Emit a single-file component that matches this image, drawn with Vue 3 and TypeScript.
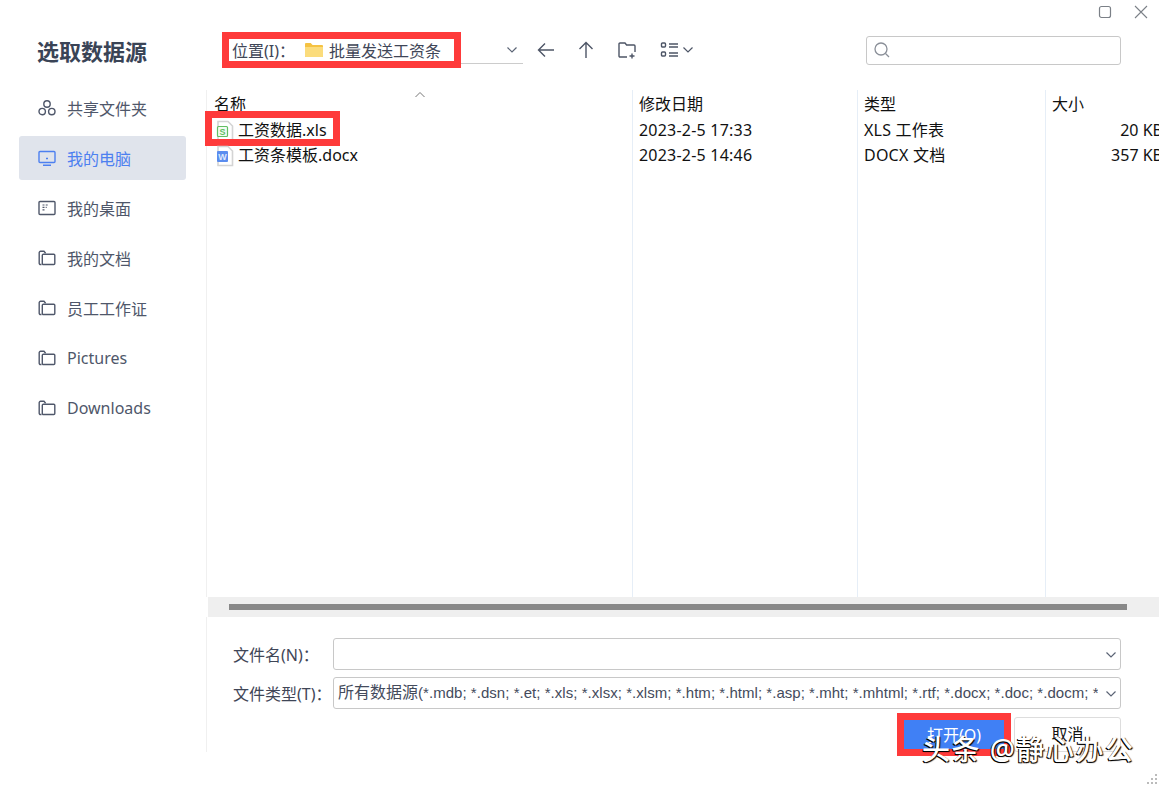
<script setup lang="ts">
interface Place {
  label: string;
  icon: "share" | "pc" | "desk" | "folder";
  active?: boolean;
}

interface Column {
  title: string;
  width: number;
  cells: string[];
  right?: boolean;
}

const places: Place[] = [
  { label: "共享文件夹", icon: "share" },
  { label: "我的电脑", icon: "pc", active: true },
  { label: "我的桌面", icon: "desk" },
  { label: "我的文档", icon: "folder" },
  { label: "员工工作证", icon: "folder" },
  { label: "Pictures", icon: "folder" },
  { label: "Downloads", icon: "folder" },
];

const columns: Column[] = [
  { title: "修改日期", width: 225, cells: ["2023-2-5 17:33", "2023-2-5 14:46"] },
  { title: "类型", width: 188, cells: ["XLS 工作表", "DOCX 文档"] },
  { title: "大小", width: 120, cells: ["20 KB", "357 KB"], right: true },
];

const filterName = "所有数据源";
const filterExts =
  "(*.mdb; *.dsn; *.et; *.xls; *.xlsx; *.xlsm; *.htm; *.html; *.asp; *.mht; *.mhtml; *.rtf; *.docx; *.doc; *.docm; *";
</script>

<template>
  <div class="dialog">
    <aside class="sidebar">
      <h1 class="title">选取数据源</h1>
      <ul class="places">
        <li v-for="p in places" :key="p.label" class="place" :class="{ active: p.active }">
          <svg class="place-icon" width="18" height="18" viewBox="0 0 18 18" fill="none" stroke="currentColor" stroke-width="1.4">
            <template v-if="p.icon === 'share'">
              <circle cx="9" cy="5" r="3.2" />
              <circle cx="4.2" cy="12.6" r="3.2" />
              <circle cx="13.8" cy="12.6" r="3.2" />
            </template>
            <template v-else-if="p.icon === 'pc'">
              <rect x="1" y="2.5" width="16" height="11" rx="1" />
              <path d="M5 16.3h8M8 9.5h2" />
            </template>
            <template v-else-if="p.icon === 'desk'">
              <rect x="1" y="2.5" width="16" height="13" rx="1" />
              <path d="M4.5 6h2M7.7 6h2M4.5 8.4h2M7.7 8.4h1M4.5 10.8h2" stroke-width="1.2" />
            </template>
            <template v-else>
              <path d="M3.5 15.5H2.6A1.3 1.3 0 0 1 1.2 14.2V3.6A1.3 1.3 0 0 1 2.6 2.3H6l1.6 2" />
              <path d="M4.3 6.4A1 1 0 0 1 5.3 5.3H15.8A1 1 0 0 1 16.8 6.3V14.5A1 1 0 0 1 15.8 15.5H5.3A1 1 0 0 1 4.3 14.5Z" />
            </template>
          </svg>
          <span>{{ p.label }}</span>
        </li>
      </ul>
    </aside>

    <main class="main">
      <div class="win-controls">
        <svg width="14" height="14" viewBox="0 0 14 14" fill="none" stroke="#7b8087" stroke-width="1.2">
          <rect x="1.5" y="1.5" width="11" height="11" rx="2" />
        </svg>
        <svg width="16" height="16" viewBox="0 0 16 16" fill="none" stroke="#7b8087" stroke-width="1.1">
          <path d="M2 2l12 12M14 2L2 14" />
        </svg>
      </div>

      <div class="toolbar">
        <div class="location">
          <span class="loc-label">位置(I)：</span>
          <svg class="loc-folder" width="18" height="15" viewBox="0 0 19 15" preserveAspectRatio="none">
            <path d="M0 2a1 1 0 0 1 1-1h5l2 2h10a1 1 0 0 1 1 1v10a1 1 0 0 1-1 1H1a1 1 0 0 1-1-1Z" fill="#f5c242" />
            <path d="M0 5h19v9a1 1 0 0 1-1 1H1a1 1 0 0 1-1-1Z" fill="#fbdc7c" />
          </svg>
          <span class="loc-name">批量发送工资条</span>
          <svg class="loc-caret" width="12" height="8" viewBox="0 0 12 8" fill="none" stroke="#5b6475" stroke-width="1.2">
            <path d="M1.5 1.5L6 6l4.5-4.5" />
          </svg>
          <div class="mark mark-loc"></div>
        </div>

        <div class="tools">
          <svg width="20" height="20" viewBox="0 0 20 20" fill="none" stroke="#4d5566" stroke-width="1.4">
            <path d="M18 10H2.5M9 3.5L2.5 10 9 16.5" />
          </svg>
          <svg width="20" height="20" viewBox="0 0 20 20" fill="none" stroke="#4d5566" stroke-width="1.4">
            <path d="M10 18V2.5M3.5 9L10 2.5 16.5 9" />
          </svg>
          <svg class="new-folder" width="20" height="20" viewBox="0 0 20 20" fill="none" stroke="#4d5566" stroke-width="1.4">
            <path d="M10 17H3a1 1 0 0 1-1-1V4a1 1 0 0 1 1-1h5l1.6 2H17a1 1 0 0 1 1 1v6" />
            <path d="M15 13.5v5M12.5 16h5" />
          </svg>
          <div class="view-btn">
            <svg width="20" height="18" viewBox="0 0 20 18" fill="none" stroke="#4d5566" stroke-width="1.4">
              <rect x="1.5" y="2" width="4" height="4" rx="1" />
              <rect x="1.5" y="11" width="4" height="4" rx="1" />
              <path d="M9 3h9M9 6h9M9 12h9M9 15h9" />
            </svg>
            <svg width="12" height="8" viewBox="0 0 12 8" fill="none" stroke="#4d5566" stroke-width="1.2">
              <path d="M1.5 1.5L6 6l4.5-4.5" />
            </svg>
          </div>
        </div>

        <div class="search">
          <svg width="18" height="18" viewBox="0 0 18 18" fill="none" stroke="#8a8f98" stroke-width="1.3">
            <circle cx="8" cy="8" r="6" />
            <path d="M12.5 12.5L16 16" />
          </svg>
        </div>
      </div>

      <div class="list">
        <section class="col col-name">
          <div class="head">
            名称
            <svg class="sort" width="12" height="7" viewBox="0 0 12 7" fill="none" stroke="#777" stroke-width="1">
              <path d="M1.5 6L6 1.5 10.5 6" />
            </svg>
          </div>
          <div class="cell file">
            <svg width="18" height="22" viewBox="0 0 18 22">
              <path d="M2 1.5H12l4.5 4.5v14.5H2Z" fill="#fff" stroke="#d4d4d4" stroke-width="1.6" />
              <rect x="1.5" y="6.5" width="10" height="10" rx="1" fill="#f2fbf2" stroke="#62bf62" stroke-width="1.2" />
              <text x="6.5" y="15" class="file-glyph" fill="#62bf62">S</text>
            </svg>
            <span>工资数据.xls</span>
            <div class="mark mark-file"></div>
          </div>
          <div class="cell file">
            <svg width="18" height="22" viewBox="0 0 18 22">
              <path d="M2 1.5H12l4.5 4.5v14.5H2Z" fill="#fff" stroke="#d4d4d4" stroke-width="1.6" />
              <rect x="1" y="6" width="11" height="11" rx="1" fill="#5b8def" />
              <text x="6.5" y="15" class="file-glyph" fill="#dfe9fc">W</text>
            </svg>
            <span>工资条模板.docx</span>
          </div>
        </section>
        <section
          v-for="c in columns"
          :key="c.title"
          class="col"
          :style="{ width: c.width + 'px' }"
        >
          <div class="head">{{ c.title }}</div>
          <div v-for="v in c.cells" :key="v" class="cell" :class="{ right: c.right }">{{ v }}</div>
        </section>
      </div>

      <div class="hscroll"><div class="thumb"></div></div>

      <form class="form" @submit.prevent>
        <div class="field-row">
          <label class="label">文件名(N)：</label>
          <div class="field">
            <svg class="caret" width="12" height="8" viewBox="0 0 12 8" fill="none" stroke="#5b6475" stroke-width="1.2">
              <path d="M1.5 1.5L6 6l4.5-4.5" />
            </svg>
          </div>
        </div>
        <div class="field-row">
          <label class="label">文件类型(T)：</label>
          <div class="field">
            <span class="filter">{{ filterName }}<span class="filter-exts">{{ filterExts }}</span></span>
            <svg class="caret" width="12" height="8" viewBox="0 0 12 8" fill="none" stroke="#5b6475" stroke-width="1.2">
              <path d="M1.5 1.5L6 6l4.5-4.5" />
            </svg>
          </div>
        </div>
        <div class="actions">
          <button class="btn primary" type="button">
            打开(O)
            <span class="mark mark-open"></span>
          </button>
          <button class="btn" type="button">取消</button>
        </div>
      </form>
    </main>

    <div class="watermark">头条 @静心办公</div>
    <svg class="grip" width="12" height="12" viewBox="0 0 12 12" fill="#bbb">
      <rect x="9" y="1" width="2" height="2" />
      <rect x="5" y="5" width="2" height="2" />
      <rect x="9" y="5" width="2" height="2" />
      <rect x="1" y="9" width="2" height="2" />
      <rect x="5" y="9" width="2" height="2" />
      <rect x="9" y="9" width="2" height="2" />
    </svg>
  </div>
</template>

<style>
html,
body {
  margin: 0;
  background: #fff;
}
</style>

<style scoped>
.dialog {
  position: relative;
  display: flex;
  width: 1159px;
  height: 786px;
  overflow: hidden;
  background: #fff;
  font-family: "Noto Sans", "Noto Sans CJK SC", sans-serif;
  font-size: 16px;
  color: #111;
}

.sidebar {
  width: 206px;
  height: 752px;
  flex-shrink: 0;
  box-sizing: border-box;
  padding-left: 19px;
}

.title {
  margin: 35px 0 0 18px;
  height: 32px;
  font-size: 22px;
  line-height: 32px;
  font-weight: 700;
  color: #3a4456;
}

.places {
  list-style: none;
  margin: 19px 0 0;
  padding: 0;
  display: flex;
  flex-direction: column;
  gap: 6px;
}

.place {
  display: flex;
  align-items: center;
  gap: 11px;
  width: 167px;
  height: 44px;
  box-sizing: border-box;
  padding-left: 19px;
  border-radius: 3px;
  color: #4f576a;
}

.place.active {
  background: #e0e4ec;
  color: #4d80f0;
}

.place-icon {
  flex-shrink: 0;
}

.main {
  flex: 1;
  min-width: 0;
  height: 752px;
  display: flex;
  flex-direction: column;
}

.win-controls {
  display: flex;
  justify-content: flex-end;
  align-items: center;
  gap: 21px;
  height: 24px;
  padding-right: 10px;
}

.toolbar {
  display: flex;
  align-items: center;
  height: 28px;
  margin-top: 12px;
  padding-left: 16px;
}

.location {
  position: relative;
  display: flex;
  align-items: center;
  width: 301px;
  height: 28px;
  box-sizing: border-box;
  padding-left: 10px;
  border-bottom: 1px solid #ccc;
  color: #3f4657;
}

.loc-label {
  width: 73px;
}

.loc-name {
  margin-left: 6px;
}

.loc-caret {
  position: absolute;
  right: 5px;
  top: 10px;
}

.tools {
  display: flex;
  align-items: center;
  gap: 20px;
  margin-left: 13px;
}

.new-folder {
  margin-left: 1px;
}

.view-btn {
  display: flex;
  align-items: center;
  gap: 2px;
  margin-left: 3px;
}

.search {
  display: flex;
  align-items: center;
  width: 255px;
  height: 29px;
  box-sizing: border-box;
  margin-left: auto;
  margin-right: 38px;
  padding-left: 6px;
  border: 1px solid #c8c8c8;
  border-radius: 3px;
}

.mark {
  position: absolute;
  box-sizing: border-box;
  border: 7px solid #fe3a3a;
  pointer-events: none;
}

.mark-loc {
  left: 0;
  top: -4px;
  width: 239px;
  height: 36px;
}

.mark-file {
  left: -2px;
  top: -7px;
  width: 135px;
  height: 35px;
}

.mark-open {
  left: -7px;
  top: -7px;
  right: -7px;
  bottom: -7px;
}

.list {
  display: flex;
  height: 507px;
  margin-top: 26px;
  border-left: 1px solid #f0f0f0;
}

.col {
  flex-shrink: 0;
  border-left: 1px solid #e6eef7;
  box-sizing: border-box;
}

.col-name {
  width: 425px;
  border-left: 0;
}

.head {
  position: relative;
  height: 28px;
  line-height: 28px;
  padding-left: 6px;
}

.col-name .head {
  padding-left: 7px;
}

.sort {
  position: absolute;
  left: 207px;
  top: 1px;
}

.cell {
  position: relative;
  height: 25px;
  line-height: 25px;
  padding-left: 6px;
  white-space: nowrap;
}

.cell:not(.right):not(.file) {
  letter-spacing: 0.22px;
}

.cell.right {
  text-align: right;
  padding-right: 2px;
}

.file {
  display: flex;
  align-items: center;
  gap: 4px;
  padding-left: 9px;
}

.file-glyph {
  font-size: 9px;
  font-weight: 700;
  text-anchor: middle;
  font-family: "Liberation Sans", sans-serif;
}

.hscroll {
  display: flex;
  align-items: center;
  height: 20px;
  margin-left: 2px;
  padding-left: 21px;
  padding-right: 32px;
  background: #efefef;
}

.thumb {
  flex: 1;
  height: 6px;
  background: #888;
}

.form {
  display: flex;
  flex-direction: column;
  gap: 7px;
  flex: 1;
  padding: 21px 38px 0 26px;
  border-left: 1px solid #f0f0f0;
}

.field-row {
  display: flex;
  align-items: center;
}

.label {
  width: 100px;
  flex-shrink: 0;
  color: #3f4657;
  white-space: nowrap;
}

.field {
  position: relative;
  flex: 1;
  min-width: 0;
  height: 32px;
  box-sizing: border-box;
  border: 1px solid #c8c8c8;
  border-radius: 3px;
  line-height: 30px;
  padding: 0 22px 0 4px;
  color: #444b5c;
}

.filter {
  display: block;
  overflow: hidden;
  white-space: nowrap;
  font-family: "Liberation Sans", "Noto Sans CJK SC", sans-serif;
}

.filter-exts {
  font-size: 15px;
  letter-spacing: 0.04px;
}

.caret {
  position: absolute;
  right: 3px;
  top: 12px;
}

.actions {
  display: flex;
  justify-content: flex-end;
  align-items: flex-start;
  gap: 10px;
  margin-top: 1px;
}

.btn {
  position: relative;
  width: 107px;
  height: 35px;
  box-sizing: border-box;
  padding: 0 0 4px;
  border: 1px solid #ddd;
  border-radius: 3px;
  background: #fff;
  font: inherit;
  color: #111;
}

.btn.primary {
  width: 100px;
  height: 29px;
  margin-top: 3px;
  padding-bottom: 2px;
  border: 0;
  border-radius: 0;
  background: #4080f5;
  color: #fff;
}

.watermark {
  position: absolute;
  left: 922px;
  top: 730px;
  font-size: 28px;
  line-height: 38px;
  font-weight: 500;
  letter-spacing: 1.5px;
  color: #fff;
  white-space: nowrap;
  text-shadow: 1px 1px 1px #000, -1px 1px 0 #000;
}

.grip {
  position: absolute;
  right: 1px;
  bottom: 1px;
}
</style>
